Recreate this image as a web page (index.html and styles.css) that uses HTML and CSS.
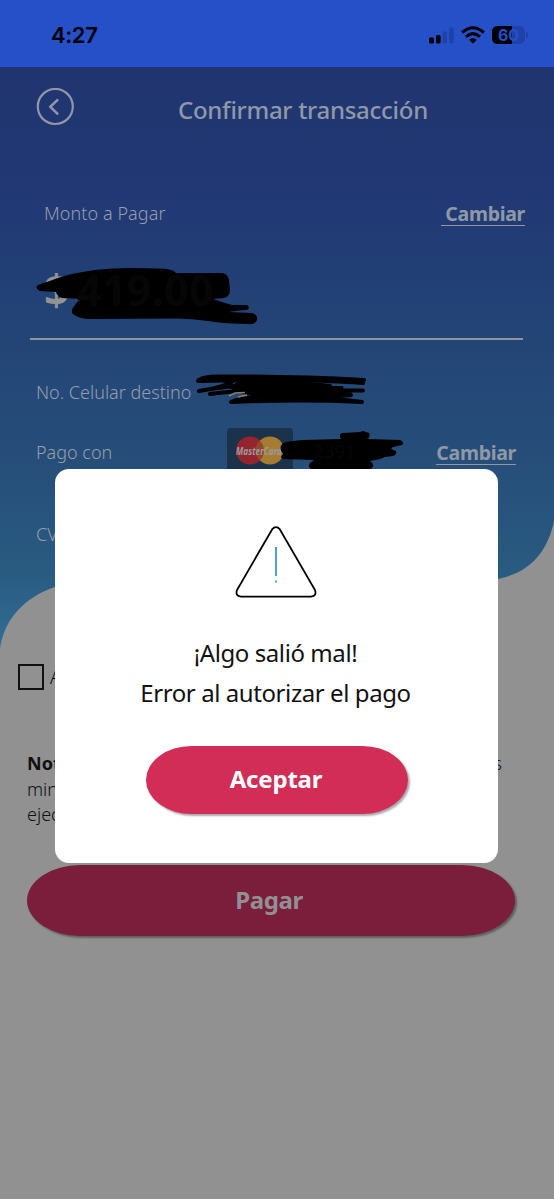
FILE: index.html
```html
<!DOCTYPE html>
<html lang="es">
<head>
<meta charset="utf-8">
<title>Confirmar transacción</title>
<link rel="stylesheet" href="styles.css">
</head>
<body>
<div class="screen">
  <header class="status">
    <span class="clock">4:27</span>
    <div class="indicators">
      <svg class="signal" width="25" height="17" viewBox="0 0 25 17"><rect x="0" y="10.5" width="5" height="6" rx="1.5"/><rect x="7" y="8" width="4.6" height="8.5" rx="1.5"/><g fill="#1e42a8"><rect x="13.6" y="4.4" width="4.4" height="12.1" rx="1.4"/><rect x="20.2" y=".4" width="4.4" height="16.1" rx="1.4"/></g></svg>
      <svg class="wifi" width="24" height="18" viewBox="0 0 24 18"><g fill="none" stroke="#000" stroke-width="3.1"><path d="M1.2 6.7Q12-3.2 22.8 6.7"/><path d="M5 10.8Q12 4.6 19 10.8"/></g><path d="M8.2 13.8Q12 10.9 15.8 13.8L12.7 17Q12 17.5 11.3 17Z"/></svg>
      <div class="battery"><span class="level">60</span><i class="tip"></i></div>
    </div>
  </header>
  <main class="page">
    <svg class="backdrop" width="554" height="600" viewBox="0 0 554 600">
      <defs><linearGradient id="sky" x1="0" y1="0" x2="0" y2="1"><stop offset="0" stop-color="#203570"/><stop offset=".22" stop-color="#213874"/><stop offset=".45" stop-color="#234476"/><stop offset=".68" stop-color="#264e79"/><stop offset=".86" stop-color="#295a80"/><stop offset="1" stop-color="#306e96"/></linearGradient></defs>
      <path fill="url(#sky)" d="M0 0H554V454C548 483 532 505 498 512C400 520 150 490 55 520C25 530 4 552 0 582Z"/>
    </svg>
    <div class="titlebar">
      <svg width="38" height="38" viewBox="0 0 38 38" fill="none" stroke="#8f98a7" stroke-width="2.2"><circle cx="19.3" cy="18.5" r="17.5"/><path d="M22.1 11.3L14.3 18.8L22.1 26.3" stroke-width="2.5"/></svg>
      <h1 class="title">Confirmar transacción</h1>
    </div>
    <section class="amount">
      <div class="row amount-head"><span class="label monto">Monto a Pagar</span><a class="change first">Cambiar</a></div>
      <div class="value"><span class="currency">$</span><span class="figure">419.00</span>
        <svg class="ink ink-amount" width="230" height="66" viewBox="35 266 230 66"><path d="M38 285Q50 281 58 278Q72 273 95 270Q112 268 130 268Q158 268 167 269Q174 270 176 273L222 273Q228 274 229 280L230 291Q229 297 224 298L213 299Q221 302 232 305L247 305Q250 307 248 309.5L228 312L252 313Q258 315 257 320Q255 325 249 324Q226 324 208 321Q192 318.5 178 318.5L88 319Q76 318 72 313Q71 309 75 305Q77 301 82 299L62 298Q57 296 56 292L40 291Q34 288 38 285Z"/></svg>
      </div>
    </section>
    <div class="row phone"><span class="label numero">No. Celular destino</span>
      <svg class="ink ink-phone" width="180" height="38" viewBox="190 370 180 38"><path class="trace" d="M198 381Q202 376 222 376.5Q290 376 364 380M198 381C235 380 300 378 363 383M199 391Q225 388 240 377M199 391Q230 385 260 385M210 394Q230 391 260 390M363 390.5H270M351 395H260M362 402Q300 399 231 402Q240 398 260 397Q300 396 330 398L362 402"/><path d="M238 381L290 380L331 384L332 386L343 386L344 390L352 393V397L335 398L290 399L255 397L240 393L229 388Z"/></svg>
      <svg class="scrap" width="22" height="8" viewBox="0 0 22 8"><path d="M1 5L7 2L17 1.5M10 6L19 4"/></svg>
    </div>
    <div class="row card"><span class="label pago">Pago con</span>
      <svg class="mastercard" width="66" height="44" viewBox="0 0 66 44"><rect width="66" height="50" rx="4" fill="#1b324b"/><circle cx="23" cy="22.5" r="14" fill="#94252e"/><circle cx="43" cy="22.5" r="14" fill="#a57c32"/><path d="M33 12.7A14 14 0 0 1 33 32.3A14 14 0 0 1 33 12.7Z" fill="#93472c"/><text x="9" y="26.5" textLength="46" lengthAdjust="spacingAndGlyphs" class="brand">MasterCard</text></svg>
      <svg class="ink ink-card" width="126" height="42" viewBox="279 428 126 42"><path d="M283 443Q290 441 303 440L341 439Q338 435 342 433L360 432L363 431L369 433Q371 437 367 439L400 440Q405 442 402 445L393 447L391 449L396 451Q397 455 393 456L385 457L380 459L370 461Q376 465 371 469L312 470Q307 467 310 463L314 460L283 459Q279 457 283 454Q278 448 283 443Z"/></svg>
      <span class="digits">2391</span>
      <a class="change">Cambiar</a>
    </div>
    <div class="row cvv"><span class="label">CVV</span></div>
    <div class="row terms"><span class="box"></span><span class="accept">A</span></div>
    <div class="note"><p class="first-line"><b>Nota:</b><span>s</span></p><p>minutos</p><p>ejecutar</p></div>
    <button class="pill pay">Pagar</button>
  </main>
  <div class="dialog" role="alertdialog">
    <svg class="warning" width="84" height="74" viewBox="0 0 84 74" fill="none" stroke-width="1.8"><path stroke="#000" d="M38.2 4.2Q42 .2 45.8 4.2L81 65Q83 71.3 77 71.6H7Q1 71.3 3 65Z"/><path stroke="#4aa5cd" stroke-width="2" d="M42 22V51M42 55.5V57.5"/></svg>
    <p class="message headline">¡Algo salió mal!</p>
    <p class="message detail">Error al autorizar el pago</p>
    <button class="pill ok">Aceptar</button>
  </div>
</div>
</body>
</html>
```
FILE: styles.css
```css
* { box-sizing: border-box; }
body { margin: 0; font-family: "Noto Sans", sans-serif; background: #919191; }
p, h1 { margin: 0; }
button { border: 0; padding: 0; font-family: inherit; }
.screen { position: relative; width: 554px; height: 1199px; overflow: hidden; background: #919191; }
.status { height: 67px; padding: 3px 27px 0 51px; display: flex; align-items: center; justify-content: space-between; background: #2550c7; }
.clock { font: 600 22px/28px Inter, sans-serif; letter-spacing: -.4px; }
.indicators { display: flex; align-items: center; gap: 7px; }
.battery { position: relative; width: 33px; height: 18px; margin-right: 2px; border-radius: 5.5px; background: linear-gradient(90deg, #000 60%, #1e42a8 60%); }
.level { display: block; text-align: center; font: 700 16px/18px Inter, sans-serif; color: #2550c7; }
.tip { position: absolute; right: -3px; top: 6px; width: 2px; height: 6px; border-radius: 0 2px 2px 0; background: #1e42a8; }
.page { position: relative; height: 1132px; }
.page > * { position: relative; }
.page > .backdrop { position: absolute; left: 0; top: 0; }
.titlebar { height: 80px; padding: 0 0 0 36px; display: flex; align-items: center; gap: 103px; }
.title { font-size: 24px; line-height: 32px; font-weight: 500; color: #8f98a7; padding-top: 5px; white-space: nowrap; letter-spacing: -.28px; padding-left: 1px; }
.row { display: flex; align-items: center; }
.label { font-weight: 300; font-size: 18px; line-height: 26px; color: #949eac; white-space: nowrap; }
.change { font-weight: 700; font-size: 19.5px; line-height: 25px; color: #8f98a5; border-bottom: 1.5px solid #8f98a5; height: 25px; letter-spacing: -.3px; }
.amount { height: 193px; margin: 0 31px 0 30px; padding-top: 53px; border-bottom: 2px solid #8f959c; }
.amount-head { height: 26px; padding-left: 14px; margin-right: -2px; justify-content: space-between; }
.monto { letter-spacing: .08px; }
.change.first { padding-left: 4px; }
.value { position: relative; height: 60px; margin: 34px 0 0 14px; display: flex; align-items: center; font-weight: 700; font-size: 43px; line-height: 60px; }
.currency { color: #929292; width: 33px; }
.figure { position: relative; z-index: 2; color: #060606; letter-spacing: .3px; }
.ink { position: absolute; z-index: 1; }
.ink-amount { left: -9px; top: 6px; }
.phone { height: 26px; margin-top: 39px; padding-left: 36px; }
.ink-phone { left: 190px; top: -9px; }
.trace { fill: none; stroke: #000; stroke-width: 4; stroke-linecap: round; stroke-linejoin: round; }
.scrap { position: absolute; z-index: 2; left: 228px; top: 12px; fill: none; stroke: #858174; stroke-width: 1.6; }
.card { height: 44px; margin-top: 23px; padding: 3px 38px 0 36px; }
.card .change { margin-left: auto; position: relative; top: 1px; }
.mastercard { position: absolute; left: 227px; top: 0; }
.brand { font: italic 700 10.5px "Noto Sans", sans-serif; fill: #9c9aa0; }
.ink-card { left: 279px; top: 0; }
.digits { position: absolute; z-index: 2; left: 314px; top: 10px; font-size: 18px; line-height: 26px; color: #070707; }
.cvv { height: 26px; margin: 49px 0 0 36px; }
.terms { height: 28px; margin: 116px 0 0 18px; gap: 6px; }
.box { width: 26px; height: 26px; border: 2px solid #111; }
.accept { font-size: 18px; font-weight: 300; }
.note { height: 78px; margin: 60px 52px 0 27px; font-size: 18px; font-weight: 300; line-height: 25.7px; color: #101010; }
.first-line { display: flex; justify-content: space-between; }
.note b { font-weight: 700; }
.pill { display: block; font-weight: 700; font-size: 24px; line-height: 32px; letter-spacing: -.4px; }
.pay { width: 488px; height: 71px; margin: 36px 0 0 27px; padding: 0 4px 2px 0; border-radius: 54px / 36px; background: #7a1e3b; color: #929092; box-shadow: 2px 2px 2px #5f5f5f; }
.dialog { position: absolute; z-index: 5; left: 55px; top: 468.5px; width: 443px; height: 394.5px; padding: 56px 0 0; border-radius: 14px; background: #fff; text-align: center; }
.warning { display: block; margin: 0 0 0 178.5px; }
.message { font-size: 24px; line-height: 40px; font-weight: 400; color: #111; letter-spacing: -.42px; padding-right: 2px; }
.headline { margin-top: 34px; }
.detail { white-space: nowrap; }
.ok { width: 262px; height: 68.5px; margin: 33px 0 0 91px; padding: 0 2px 2px 0; letter-spacing: -.2px; border-radius: 47px / 35px; background: #d22d57; color: #fff; box-shadow: 2px 2px 2px #aaa; }
```
